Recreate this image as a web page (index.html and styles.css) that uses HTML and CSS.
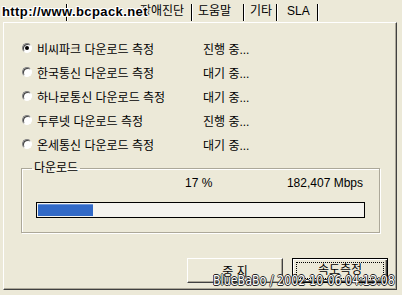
FILE: index.html
```html
<!DOCTYPE html>
<html lang="ko">
<head>
    <meta charset="UTF-8">
    <title>속도측정</title>
    <link rel="stylesheet" href="styles.css">
</head>
<body>

<div class="dialog">
    <div class="tabs">
        <span class="tab tab-speed"></span>
        <span class="tab tab-diag">장애진단</span>
        <span class="tab tab-help">도움말</span>
        <span class="tab tab-etc">기타</span>
        <span class="tab tab-sla">SLA</span>
    </div>

    <div class="panel">
        <ul class="sites">
            <li class="site"><span class="radio checked"></span><span class="site-name">비씨파크 다운로드 측정</span><span class="site-status">진행 중...</span></li>
            <li class="site"><span class="radio"></span><span class="site-name">한국통신 다운로드 측정</span><span class="site-status">대기 중...</span></li>
            <li class="site"><span class="radio"></span><span class="site-name">하나로통신 다운로드 측정</span><span class="site-status">대기 중...</span></li>
            <li class="site"><span class="radio"></span><span class="site-name">두루넷 다운로드 측정</span><span class="site-status">진행 중...</span></li>
            <li class="site"><span class="radio"></span><span class="site-name">온세통신 다운로드 측정</span><span class="site-status">대기 중...</span></li>
        </ul>

        <fieldset class="group">
            <legend>다운로드</legend>
            <div class="stats">
                <span class="percent">17 %</span>
                <span class="speed">182,407 Mbps</span>
            </div>
            <div class="bar">
                <div class="bar-fill" style="width: 17%"></div>
            </div>
        </fieldset>

        <div class="buttons">
            <button class="btn">중 지</button>
            <button class="btn btn-default"><span class="focus">속도측정</span></button>
        </div>
    </div>

    <!-- 캡처 위에 찍힌 워터마크 -->
    <div class="mark-top">http://www.bcpack.net</div>
    <div class="mark-bottom">BlueBaBo / 2002-10-06 04:13:08</div>
</div>

</body>
</html>
```

FILE: styles.css
```css
body {
    margin: 0;
    background-color: #ece9d8;
    font-family: "Liberation Sans", "Noto Sans CJK KR", sans-serif;
    font-size: 12px;
    color: #000;
}
.dialog {
    position: relative;
    width: 402px;
    height: 295px;
    overflow: hidden;
}
.tabs {
    display: flex;
    height: 22px;
    padding-left: 3px;
    box-sizing: border-box;
}
.tab {
    box-sizing: border-box;
    height: 17px;
    margin-top: 4px;
    line-height: 15px;
    padding-left: 6px;
    white-space: nowrap;
    border-right: 1px solid #000;
    box-shadow: 1px 0 0 #fff;
}
.tab-speed { width: 64px; }
.tab-diag { width: 125px; padding-left: 73px; }
.tab-help { width: 52px; }
.tab-etc { width: 33px; }
.tab-sla { width: 41px; padding-left: 10px; }
.panel {
    box-sizing: border-box;
    width: 394px;
    height: 268px;
    margin-left: 3px;
    padding: 13px 16px 0 17px;
    border-top: 1px solid #fff;
    border-left: 1px solid #fff;
    border-right: 1px solid #404040;
    border-bottom: 1px solid #404040;
    box-shadow: inset -1px -1px 0 #aca899;
}
.sites {
    list-style: none;
    margin: 0;
    padding: 0;
}
.site {
    display: flex;
    align-items: center;
    height: 24px;
    padding-left: 1px;
}
.radio {
    position: relative;
    box-sizing: border-box;
    width: 10px;
    height: 10px;
    margin-right: 5px;
    border-radius: 50%;
    border: 1px solid;
    border-color: #808080 #fff #fff #808080;
    background: #fff;
    box-shadow: inset 1px 1px 0 #404040;
}
.radio.checked::after {
    content: "";
    position: absolute;
    left: 2px;
    top: 2px;
    width: 4px;
    height: 4px;
    border-radius: 50%;
    background: #000;
}
.site-name {
    width: 166px;
}
.group {
    margin: 5px 0 0 0;
    padding: 0 0 14px 0;
    border: 1px solid #aca899;
    box-shadow: 1px 1px 0 #fff, inset 1px 1px 0 #fff;
}
.group legend {
    margin-left: 10px;
    padding: 0 2px;
    line-height: 14px;
}
.stats {
    display: flex;
    height: 14px;
    line-height: 14px;
    margin-top: 1px;
    padding-right: 16px;
}
.percent {
    margin-left: 163px;
}
.speed {
    margin-left: auto;
}
.bar {
    box-sizing: border-box;
    height: 16px;
    margin: 12px 14px 0 14px;
    padding: 1px;
    border: 1px solid #000;
    background: #f4f3ee;
}
.bar-fill {
    height: 100%;
    background: #3169c6;
    box-shadow: inset 0 1px 0 #6d97dc;
}
.buttons {
    display: flex;
    justify-content: flex-end;
    gap: 9px;
    margin: 25px -8px 0 0;
}
.btn {
    box-sizing: border-box;
    width: 96px;
    height: 25px;
    padding: 0;
    font: inherit;
    color: #000;
    background: #ece9d8;
    border: 1px solid;
    border-color: #fff #404040 #404040 #fff;
    box-shadow: inset -1px -1px 0 #aca899;
}
.btn-default {
    padding: 3px;
    border: 1px solid #000;
    box-shadow: inset 1px 1px 0 #fff, inset -1px -1px 0 #404040, inset -2px -2px 0 #aca899;
}
.focus {
    display: block;
    height: 100%;
    line-height: 15px;
    border: 1px dotted #000;
    box-sizing: border-box;
}
.mark-top {
    position: absolute;
    left: 2px;
    top: 4px;
    font: bold 13px "Liberation Sans", sans-serif;
    letter-spacing: 0.4px;
    white-space: nowrap;
    color: #000;
    text-shadow: 1px 0 0 #fff, -1px 0 0 #fff, 0 1px 0 #fff, 0 -1px 0 #fff,
                 1px 1px 0 #fff, -1px -1px 0 #fff, 1px -1px 0 #fff, -1px 1px 0 #fff;
}
.mark-bottom {
    position: absolute;
    left: 213px;
    top: 272px;
    font: 14px "DejaVu Sans Condensed", "Liberation Sans", sans-serif;
    white-space: nowrap;
    color: #fff;
    transform-origin: left top;
    transform: scaleX(0.88);
    text-shadow: 1px 0 0 #222, -1px 0 0 #222, 0 1px 0 #222, 0 -1px 0 #222;
}
```
